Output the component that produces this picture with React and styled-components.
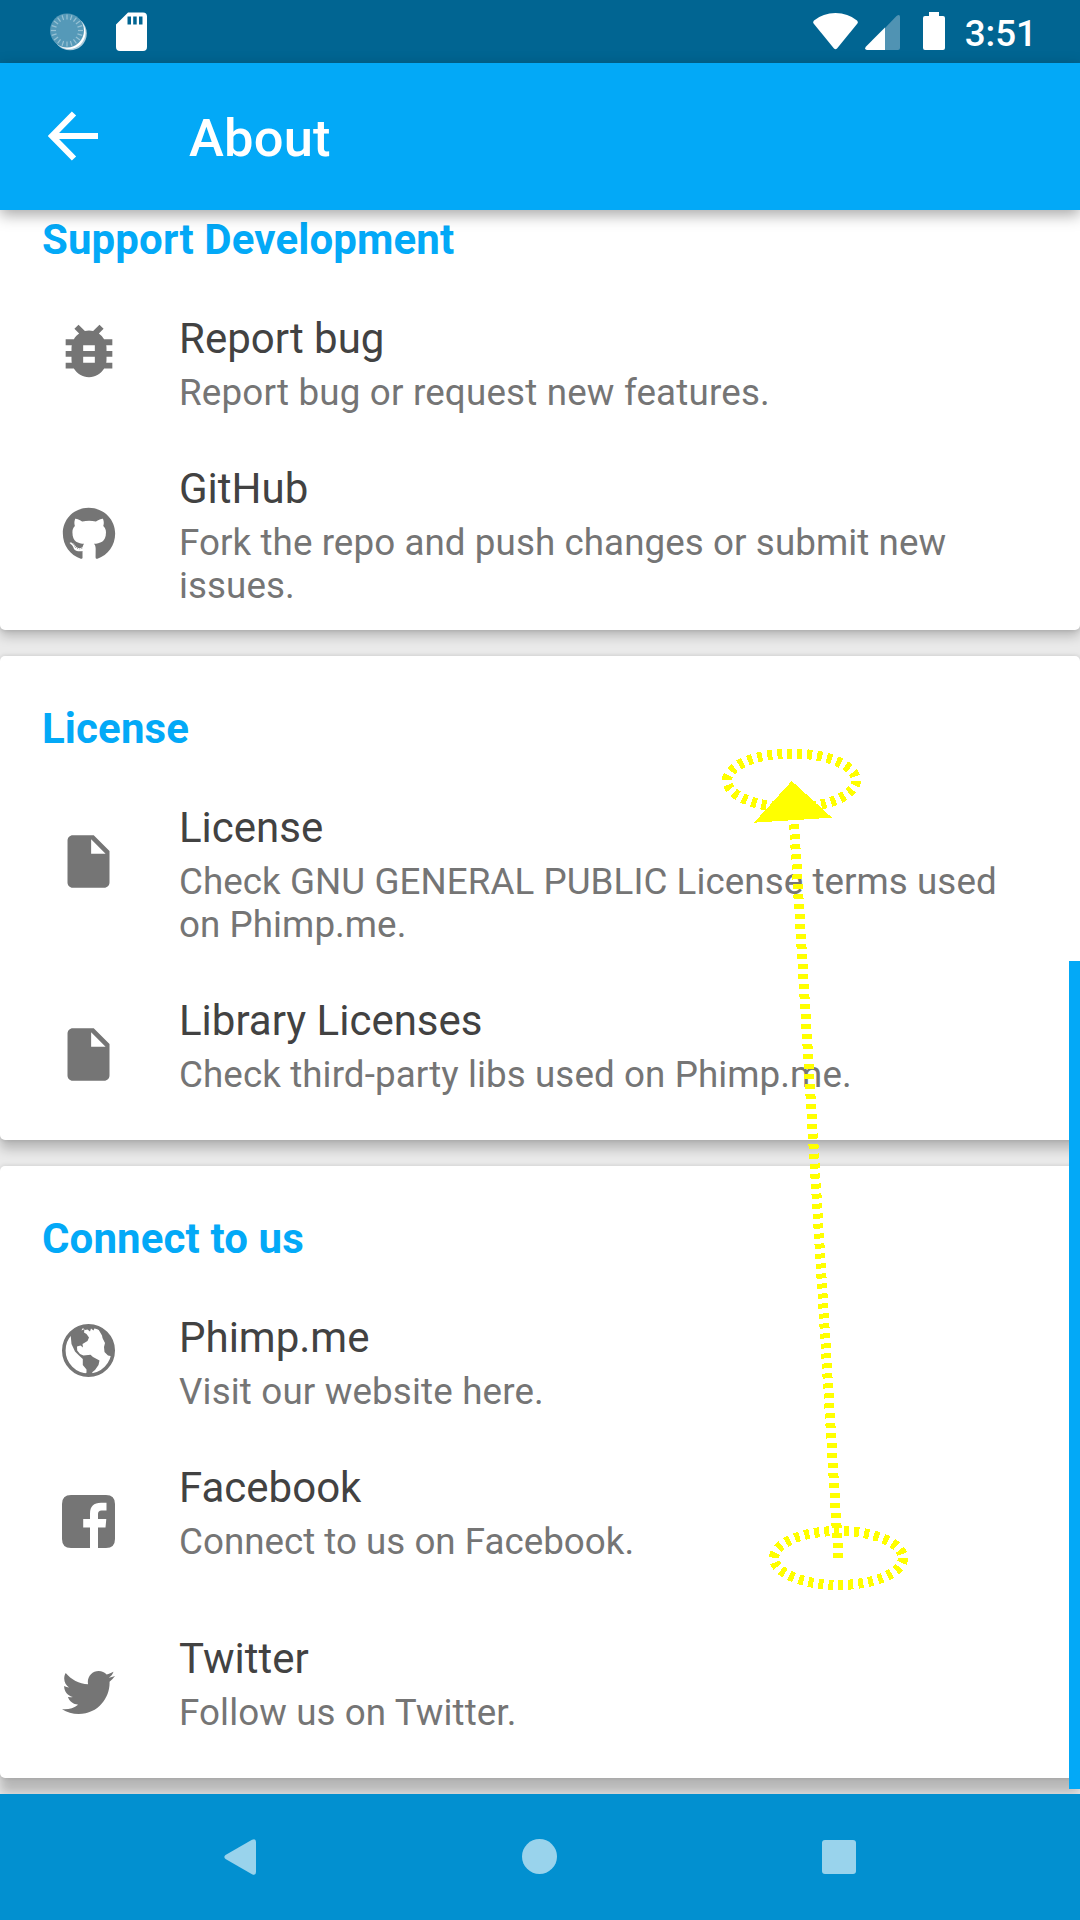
import React from "react";
import styled, { createGlobalStyle } from "styled-components";
import { MdBugReport } from "react-icons/md";
import { FaGithub, FaTwitter } from "react-icons/fa";

const Global = createGlobalStyle`
  * { box-sizing: border-box; }
  body { margin: 0; background: #eaeaea; font-family: Roboto, "Noto Sans", sans-serif; }
`;

const Screen = styled.div`
  position: relative;
  width: 1080px;
  height: 1920px;
  overflow: hidden;
  display: flex;
  flex-direction: column;
`;

const StatusBar = styled.header`
  flex: none;
  height: 63px;
  padding: 0 43px 0 50px;
  display: flex;
  align-items: center;
  justify-content: space-between;
  background: #016592;
`;

const StatusGroup = styled.div`
  display: flex;
  align-items: center;
`;

const StatusIcon = styled.svg`
  display: block;
  flex: none;
  height: 39px;
  margin-right: ${(p) => p.$gap || 0}px;
`;

const Clock = styled.span`
  margin-top: 3px;
  font-size: 36.75px;
  font-weight: 500;
  line-height: 39px;
  color: #fff;
`;

const AppBar = styled.div`
  flex: none;
  position: relative;
  z-index: 2;
  height: 147px;
  padding-left: 48px;
  display: flex;
  align-items: center;
  background: #03a9f7;
  box-shadow: 0 5px 14px rgba(0, 0, 0, 0.34);
`;

const BackArrow = styled.svg`
  display: block;
  width: 50px;
  height: 50px;
  margin: -2px 91px 0 0;
`;

const AppTitle = styled.h1`
  margin: 3px 0 0;
  font-size: 52.5px;
  font-weight: 500;
  line-height: 62px;
  letter-spacing: 0.2px;
  color: #fff;
`;

const Content = styled.main`
  flex: 1;
  min-height: 0;
  overflow: hidden;
  display: flex;
  flex-direction: column;
  gap: 26px;
  background: #eaeaea;
`;

const Card = styled.section`
  flex: none;
  padding: ${(p) => (p.$first ? "5px 0 0" : "48px 0 19px")};
  background: #fff;
  border-radius: ${(p) => (p.$first ? "0 0 5px 5px" : "5px")};
  box-shadow: 0 ${(p) => p.$drop}px 12px rgba(0, 0, 0, 0.22), 0 0 5px rgba(0, 0, 0, 0.14);
`;

const SectionTitle = styled.h2`
  margin: 0 0 25px;
  padding-left: 42px;
  font-size: 42px;
  font-weight: 700;
  line-height: 49px;
  letter-spacing: 0.12px;
  color: #03a9f7;
`;

const Row = styled.div`
  display: flex;
  align-items: flex-start;
  padding: 25px 60px ${(p) => p.$bottom ?? 25}px 62px;
`;

const RowIcon = styled.div`
  flex: none;
  width: 53px;
  height: 53px;
  margin: ${(p) => p.$top}px 64px 0 0;
  display: flex;
  align-items: center;
  justify-content: center;
  color: #757575;
  svg { display: block; flex: none; }
`;

const RowText = styled.div`
  display: flex;
  flex-direction: column;
  gap: 8px;
`;

const RowTitle = styled.div`
  font-size: 42px;
  line-height: 49px;
  color: #424242;
`;

const RowDetail = styled.div`
  font-size: 36.75px;
  line-height: 43px;
  letter-spacing: ${(p) => p.$tracking || 0}px;
  color: #757575;
`;

const ScrollThumb = styled.div`
  position: absolute;
  right: 0;
  top: 961px;
  width: 11px;
  height: 828px;
  background: #03a9f7;
`;

const Gesture = styled.svg`
  position: absolute;
  left: 700px;
  top: 730px;
  pointer-events: none;
`;

const NavBar = styled.nav`
  flex: none;
  position: relative;
  height: 126px;
  padding: 0 91px 1px 90px;
  display: grid;
  grid-template-columns: repeat(3, 1fr);
  align-items: center;
  justify-items: center;
  background: #0290d0;
`;

const NavIcon = styled.svg`
  display: block;
  fill: #99d3ec;
`;

const FileIcon = () => (
  <svg width="63" height="63" viewBox="0 0 24 24" fill="currentColor">
    <path d="M6 2c-1.1 0-1.99.9-1.99 2L4 20c0 1.1.89 2 1.99 2H18c1.1 0 2-.9 2-2V8l-6-6H6zm7 7V3.5L18.5 9H13z" />
  </svg>
);

const FacebookIcon = () => (
  <svg width="53" height="53" viewBox="0 0 53 53" fill="currentColor">
    <path d="M9 0H44Q53 0 53 9V44Q53 53 44 53H36V32.500H43.500L44.300 24H36V19Q36 15.500 39.500 15.500H44.500V7.800H39Q28 8 28 18.500V24H21.200V32.500H28V53H9Q0 53 0 44V9Q0 0 9 0Z" />
  </svg>
);

const GlobeIcon = () => (
  <svg width="53" height="53" viewBox="0 0 53 53" fill="currentColor">
    <circle cx="26.500" cy="26.500" r="24.700" fill="none" stroke="currentColor" strokeWidth="3.600" />
    <path d="M8.500 9.500 17 3.500 21 3 19.500 6.500 22.500 5 22 8.500 24.500 10 27 13.500 25.500 17 20.500 20 21 23.500 18.500 21.500 15 22.500 15.200 26.500 18 30 21.500 31.500 28.500 30.800 31 33 37.500 36.500 36.500 41 33 46 30.500 48 29 52 22.500 51.500 24.500 48.500 24.500 45.500 20.800 41 20.800 35 17 31.500 13 27.500 9.500 20Z" />
    <path d="M20 3 33 3 31.500 6.500 29 4.500 28 7.500 25.500 5.500 23 6Z" />
    <path d="M36.500 5.500 42 6.500 49 15 52 26 51 32.500 46 31.500 42.500 28 42 23 43 19 40.500 14 40 11.500Z" />
  </svg>
);

const SECTIONS = [
  {
    title: "Support Development",
    drop: 6,
    rows: [
      {
        title: "Report bug",
        lines: ["Report bug or request new features."],
        icon: <MdBugReport size={70} />,
        top: 10,
        tracking: 0.18,
      },
      {
        title: "GitHub",
        lines: ["Fork the repo and push changes or submit new", "issues."],
        icon: <FaGithub size={54} />,
        top: 43,
        bottom: 23,
        tracking: 0.08,
      },
    ],
  },
  {
    title: "License",
    drop: 9,
    rows: [
      {
        title: "License",
        lines: ["Check GNU GENERAL PUBLIC License terms used", "on Phimp.me."],
        icon: <FileIcon />,
        top: 32,
        tracking: 0.06,
      },
      {
        title: "Library Licenses",
        lines: ["Check third-party libs used on Phimp.me."],
        icon: <FileIcon />,
        top: 32,
        tracking: 0.09,
      },
    ],
  },
  {
    title: "Connect to us",
    drop: 15,
    rows: [
      { title: "Phimp.me", lines: ["Visit our website here."], icon: <GlobeIcon />, top: 11, tracking: 0.15 },
      { title: "Facebook", lines: ["Connect to us on Facebook."], icon: <FacebookIcon />, top: 32, bottom: 46 },
      { title: "Twitter", lines: ["Follow us on Twitter."], icon: <FaTwitter size={53} />, top: 32, tracking: 0.1 },
    ],
  },
];

const TICKS = Array.from({ length: 20 }, (_, i) => i * 18);

export default function App() {
  return (
    <Screen>
      <Global />
      <StatusBar>
        <StatusGroup>
          <StatusIcon width="37" viewBox="0 0 37 39" $gap={29}>
            <circle cx="20" cy="21.500" r="16.800" fill="#a9cbdb" />
            <circle cx="19" cy="20.500" r="16.500" fill="#fff" />
            <circle cx="17" cy="18.500" r="17" fill="#5599b8" />
            {TICKS.map((a) => (
              <line key={a} x1="17" y1="2.500" x2="17" y2="7.500" stroke="#96c1d4" strokeWidth="1.200" transform={`rotate(${a} 17 18.500)`} />
            ))}
          </StatusIcon>
          <StatusIcon width="31" viewBox="0 0 31 39">
            <path fillRule="evenodd" fill="#fff" d="M12 .5H27Q31 .5 31 4.500V35Q31 39 27 39H4Q0 39 0 35V12.500ZM11.500 4.500V12.500H15V4.500ZM17.200 4.500V12.500H20.700V4.500ZM23 4.500V12.500H26.500V4.500Z" />
          </StatusIcon>
        </StatusGroup>
        <StatusGroup>
          <StatusIcon width="45" viewBox="0 0 45 39" $gap={7}>
            <path fill="#fff" d="M1 8.500Q10 1 22.500 1T44 8.500Q45.500 10 44 12L24 36.500Q22.500 38 21 36.500L1 12Q-.5 10 1 8.500Z" />
          </StatusIcon>
          <StatusIcon width="35" viewBox="0 0 35 39" $gap={23}>
            <path fill="#5093b3" d="M20 16 31.500 4Q35 1.500 35 5V36Q35 38 33 38H20Z" />
            <path fill="#fff" d="M20 15.500V38H2Q-1 37.500 .8 34.800Z" />
          </StatusIcon>
          <StatusIcon width="22" viewBox="0 0 22 39" $gap={20}>
            <path fill="#fff" d="M6 0H16V4H20Q22 4 22 6V36Q22 38 20 38H2Q0 38 0 36V6Q0 4 2 4H6Z" />
          </StatusIcon>
          <Clock>3:51</Clock>
        </StatusGroup>
      </StatusBar>
      <AppBar>
        <BackArrow viewBox="0 0 50 50" fill="none" stroke="#fff" strokeWidth="6">
          <path d="M50 25H5M26 2.500 4 25 26 47.500" />
        </BackArrow>
        <AppTitle>About</AppTitle>
      </AppBar>
      <Content>
        {SECTIONS.map((section, i) => (
          <Card key={section.title} $first={i === 0} $drop={section.drop}>
            <SectionTitle>{section.title}</SectionTitle>
            {section.rows.map((row) => (
              <Row key={row.title} $bottom={row.bottom}>
                <RowIcon $top={row.top}>{row.icon}</RowIcon>
                <RowText>
                  <RowTitle>{row.title}</RowTitle>
                  <RowDetail $tracking={row.tracking}>
                    {row.lines.map((line) => (
                      <div key={line}>{line}</div>
                    ))}
                  </RowDetail>
                </RowText>
              </Row>
            ))}
          </Card>
        ))}
      </Content>
      <NavBar>
        <NavIcon width="32" height="36" viewBox="0 0 32 36">
          <path d="M28 .8Q32 -1 32 3V33Q32 37 28 35.200L1.500 20Q-.8 18 1.500 16Z" />
        </NavIcon>
        <NavIcon width="35" height="35" viewBox="0 0 35 35">
          <circle cx="17.500" cy="17.500" r="17.500" />
        </NavIcon>
        <NavIcon width="34" height="34" viewBox="0 0 34 34">
          <rect width="34" height="34" rx="3" />
        </NavIcon>
      </NavBar>
      <ScrollThumb />
      <Gesture width="230" height="880" viewBox="700 730 230 880" fill="none" stroke="#ff0" strokeWidth="10" strokeDasharray="5 5" shapeRendering="crispEdges">
        <ellipse cx="791.5" cy="780.500" rx="64.5" ry="27" />
        <ellipse cx="838.5" cy="1558" rx="64.5" ry="27" />
        <line x1="838.500" y1="1558" x2="793.500" y2="815" />
        <polygon points="791.7,781 754,822.7 832,817.7" fill="#ff0" stroke="none" />
      </Gesture>
    </Screen>
  );
}
